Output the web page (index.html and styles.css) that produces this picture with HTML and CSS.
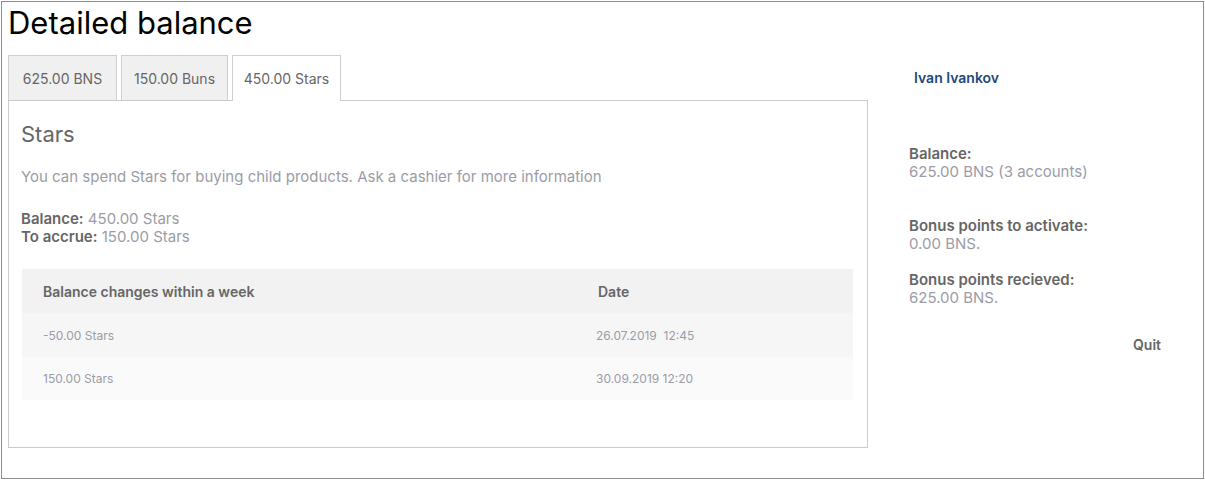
FILE: index.html
```html
<!DOCTYPE html>
<html>
<head>
<meta charset="utf-8">
<link rel="stylesheet" href="styles.css">
</head>
<body>
<div class="frame">
  <h1 class="title">Detailed balance</h1>
  <div class="layout">
    <div class="main">
      <div class="tabs">
        <div class="tab w1">625.00 BNS</div>
        <div class="tab w2">150.00 Buns</div>
        <div class="tab w1 active">450.00 Stars</div>
      </div>
      <div class="panel">
        <h2 class="panel-title">Stars</h2>
        <p class="desc">You can spend Stars for buying child products. Ask a cashier for more information</p>
        <div class="stats">
          <div><b>Balance:</b> 450.00 Stars</div>
          <div><b>To accrue:</b> 150.00 Stars</div>
        </div>
        <div class="table">
          <div class="row head">
            <div class="c1">Balance changes within a week</div>
            <div class="c2">Date</div>
          </div>
          <div class="row odd">
            <div class="c1">-50.00 Stars</div>
            <div class="c2">26.07.2019&nbsp; 12:45</div>
          </div>
          <div class="row even">
            <div class="c1">150.00 Stars</div>
            <div class="c2">30.09.2019 12:20</div>
          </div>
        </div>
      </div>
    </div>
    <div class="side">
      <div class="user">Ivan Ivankov</div>
      <div class="info first">
        <div class="label">Balance:</div>
        <div class="value">625.00 BNS (3 accounts)</div>
      </div>
      <div class="info">
        <div class="label">Bonus points to activate:</div>
        <div class="value">0.00 BNS.</div>
      </div>
      <div class="info">
        <div class="label">Bonus points recieved:</div>
        <div class="value">625.00 BNS.</div>
      </div>
      <div class="quit">Quit</div>
    </div>
  </div>
</div>
</body>
</html>
```
FILE: styles.css
```css
* { box-sizing: border-box; }
html, body { margin: 0; padding: 0; background: #fff; }
body { font-family: Inter, "Noto Sans", sans-serif; color: #555; }
.frame {
  margin: 1px;
  height: 478px;
  border: 1px solid #8c8c8c;
  padding: 0 0 0 6px;
}
.title {
  margin: 0;
  padding-top: 3px;
  font-size: 31px;
  font-weight: 400;
  line-height: 36px;
  color: #000;
}
.layout {
  display: flex;
  margin-top: 14px;
}
.main { width: 860px; flex: none; }
.tabs { display: flex; gap: 4px; height: 46px; }
.tab {
  height: 45px;
  border: 1px solid #cfcfcf;
  border-bottom: none;
  background: #f0f0f0;
  font-size: 14px;
  color: #666;
  display: flex;
  align-items: center;
  justify-content: center;
}
.tab.w1 { width: 109px; }
.tab.w2 { width: 107px; }
.tab.active {
  background: #fff;
  height: 46px;
  position: relative;
  z-index: 1;
}
.panel {
  margin-top: -1px;
  border: 1px solid #cbcbcb;
  height: 348px;
  padding: 18px 14px 0 12px;
}
.panel-title {
  margin: 0;
  font-size: 22px;
  font-weight: 400;
  line-height: 30px;
  color: #666;
}
.desc {
  margin: 16px 0 0;
  font-size: 15px;
  line-height: 24px;
  color: #9b9ca6;
}
.stats {
  margin-top: 21px;
  font-size: 15px;
  line-height: 18px;
  color: #9b9ca6;
}
.stats b { color: #666; font-weight: 600; }
.table { margin: 23px 0 0 1px; }
.row { display: flex; align-items: center; }
.row.head { height: 44px; background: #f2f2f2; font-size: 14px; font-weight: 600; color: #666; }
.row.odd { height: 44px; background: #f6f6f6; }
.row.even { height: 43px; background: #fafafa; }
.row.odd, .row.even { font-size: 12px; color: #9b9ca6; }
.c1 { width: 576px; padding-left: 21px; }
.row.odd .c2, .row.even .c2 { margin-left: -2px; }
.side {
  margin-left: 41px;
  width: 252px;
  display: flex;
  flex-direction: column;
}
.user {
  margin-top: 14px;
  padding-left: 5px;
  font-size: 14px;
  font-weight: 600;
  line-height: 18px;
  color: #1f4a78;
}
.info { font-size: 15px; line-height: 18px; margin-top: 18px; }
.info.first { margin-top: 58px; }
.info.first + .info { margin-top: 36px; }
.label { font-weight: 600; color: #666; }
.value { color: #9b9ca6; }
.quit {
  margin-top: 29px;
  align-self: flex-end;
  font-size: 14px;
  font-weight: 600;
  line-height: 18px;
  color: #666;
}
```
